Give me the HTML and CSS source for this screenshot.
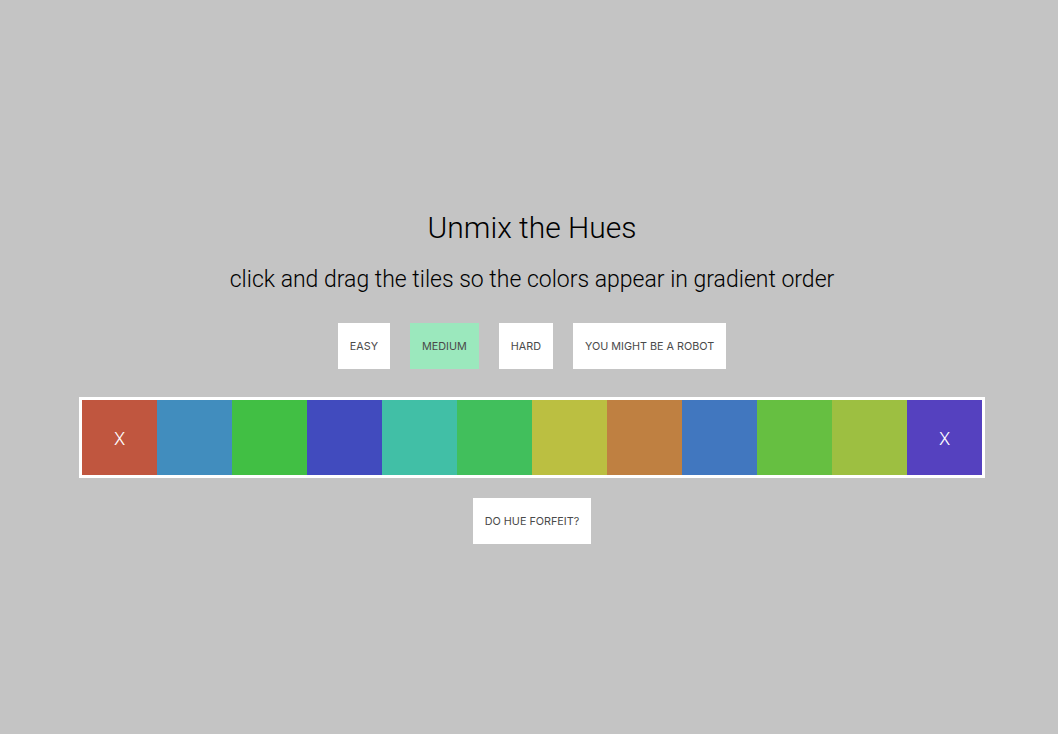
FILE: index.html
```html
<!DOCTYPE html>
<html>
<head>
<meta charset="utf-8">
<link rel="stylesheet" href="styles.css">
</head>
<body>
<main class="game">
  <h1 class="title">Unmix the Hues</h1>
  <p class="subtitle">click and drag the tiles so the colors appear in gradient order</p>
  <div class="levels">
    <button class="btn">Easy</button>
    <button class="btn btn-active">Medium</button>
    <button class="btn">Hard</button>
    <button class="btn">You might be a robot</button>
  </div>
  <div class="board">
    <div class="tile t1 fixed">x</div>
    <div class="tile t2"></div>
    <div class="tile t3"></div>
    <div class="tile t4"></div>
    <div class="tile t5"></div>
    <div class="tile t6"></div>
    <div class="tile t7"></div>
    <div class="tile t8"></div>
    <div class="tile t9"></div>
    <div class="tile t10"></div>
    <div class="tile t11"></div>
    <div class="tile t12 fixed">x</div>
  </div>
  <button class="btn forfeit">Do hue forfeit?</button>
</main>
</body>
</html>
```
FILE: styles.css
```css
html, body {
  margin: 0;
  padding: 0;
  height: 100%;
}
body {
  background: #c4c4c4;
  font-family: Roboto, "Liberation Sans", sans-serif;
  color: #000;
}
.game {
  display: flex;
  flex-direction: column;
  align-items: center;
  padding-top: 208px;
  padding-left: 6px;
}
.title {
  margin: 0;
  font-size: 30px;
  font-weight: 300;
  line-height: 40px;
}
.subtitle {
  margin: 18px 0 0;
  font-size: 23px;
  font-weight: 300;
  line-height: 28px;
}
.levels {
  display: flex;
  gap: 20px;
  margin-top: 29px;
}
.btn {
  background: #fff;
  border: none;
  border-radius: 0;
  height: 46px;
  padding: 0 12px;
  font-family: Inter, "Liberation Sans", sans-serif;
  font-size: 10.8px;
  font-weight: 400;
  text-transform: uppercase;
  color: #4a4a4a;
  cursor: pointer;
}
.btn-active {
  background: #9be8bd;
}
.board {
  display: flex;
  border: 3px solid #fff;
  margin-top: 28px;
}
.tile {
  width: 75px;
  height: 75px;
  display: flex;
  align-items: center;
  justify-content: center;
  color: #fff;
  font-family: Inter, "Liberation Sans", sans-serif;
  font-size: 17px;
  font-weight: 300;
  text-transform: uppercase;
  padding-top: 3px;
  box-sizing: border-box;
}
.t1 { background: #c0563f; }
.t2 { background: #418dbe; }
.t3 { background: #41bf44; }
.t4 { background: #414bbe; }
.t5 { background: #41bfa6; }
.t6 { background: #41bf5c; }
.t7 { background: #bbbf41; }
.t8 { background: #bf8041; }
.t9 { background: #4177bf; }
.t10 { background: #66bf41; }
.t11 { background: #9dbf41; }
.t12 { background: #5541bf; }
.forfeit {
  margin-top: 20px;
}
```
